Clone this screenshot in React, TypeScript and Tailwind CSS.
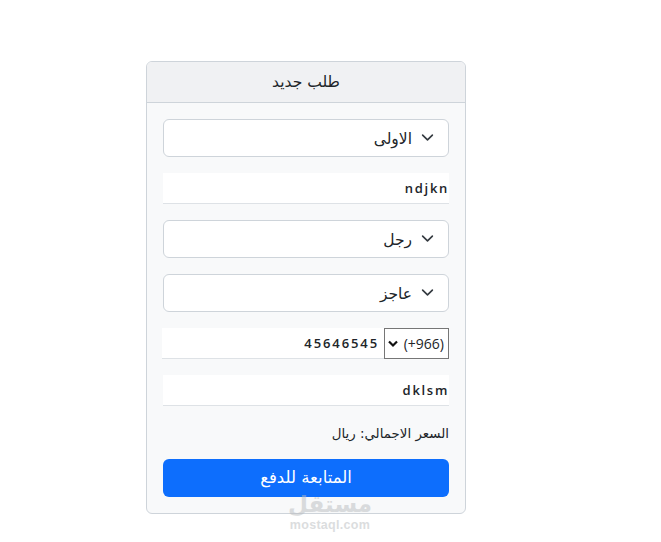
import React from "react";

const font = { fontFamily: '"DejaVu Sans", "Noto Sans", sans-serif' };

function Chevron() {
  return (
    <svg width="13" height="13" viewBox="0 0 16 16" fill="none" stroke="#343a40" strokeWidth="2" strokeLinecap="round" strokeLinejoin="round" className="shrink-0">
      <path d="m2 5 6 6 6-6" />
    </svg>
  );
}

function Sel({ label }: { label: string }) {
  return (
    <div className="flex h-[38px] w-full items-center gap-[8px] rounded-[6px] border border-[#ced4da] bg-white pr-[14px] text-[#212529]">
      <span className="relative top-[-1px] flex w-[14px] justify-center"><Chevron /></span>
      <span className="relative top-[1px] text-[15.5px] leading-[24px]">{label}</span>
    </div>
  );
}

function Field({ value }: { value: string }) {
  return (
    <div className="flex h-[31px] w-full items-center border-b border-[#dee2e6] bg-white pt-[1px] font-['Open_Sans'] text-[13px] font-semibold tracking-[1.7px] text-[#212529]">
      {value}
    </div>
  );
}

export default function App() {
  return (
    <div dir="rtl" className="relative flex h-[542px] w-[661px] justify-start overflow-hidden bg-white pr-[195px] pt-[61px]" style={font}>
      <div className="h-[453px] w-[320px] rounded-[6px] border border-[#ced4da] bg-[#f8f9fa]">
        <div className="flex h-[41px] items-center justify-center rounded-t-[5px] border-b border-[#ced4da] bg-[#f0f1f3] pt-[2px] text-[15.5px] text-[#212529]">
          طلب جديد
        </div>
        <div className="flex flex-col px-[16px] pt-[16px]">
          <Sel label="الاولى" />
          <div className="mt-[16px]"><Field value="ndjkn" /></div>
          <div className="mt-[16px]"><Sel label="رجل" /></div>
          <div className="mt-[16px]"><Sel label="عاجز" /></div>
          <div className="mt-[16px] flex h-[31px]">
            <div dir="ltr" className="flex h-[31px] w-[65px] shrink-0 items-center justify-between border border-[#767676] bg-white pl-[3px] pr-[4px] font-['Open_Sans'] text-[14px] text-[#212529]">
              <svg width="10" height="8" viewBox="0 0 10 8" fill="none" stroke="#111" strokeWidth="2.2"><path d="m1 1.5 4 4 4-4" /></svg>
              <span>(+966)</span>
            </div>
            <div className="ml-[-1px] w-[222px]">
              <div className="flex h-[31px] items-center border-b border-[#dee2e6] bg-white pr-[5px] pt-[1px] font-['Open_Sans'] text-[13px] font-semibold tracking-[1.9px] text-[#212529]">
                45646545
              </div>
            </div>
          </div>
          <div className="mt-[16px]"><Field value="dklsm" /></div>
          <div className="mt-[18px] flex h-[20px] items-center text-[13.4px] text-[#212529]">السعر الاجمالي: ريال</div>
          <button className="mt-[15px] flex h-[38px] w-full items-center justify-center rounded-[6px] bg-[#0d6efd] text-[16.5px] text-white">
            المتابعة للدفع
          </button>
        </div>
      </div>
      <div dir="ltr" className="pointer-events-none absolute left-[280px] top-[490px] flex w-[100px] flex-col items-center text-[#b9bcbf] opacity-50">
        <span className="text-[23px] font-bold leading-[28px]" dir="rtl">مستقل</span>
        <span className="font-['Liberation_Sans'] text-[12.5px] font-bold leading-[15px] tracking-[0.3px]">mostaql.com</span>
      </div>
    </div>
  );
}
